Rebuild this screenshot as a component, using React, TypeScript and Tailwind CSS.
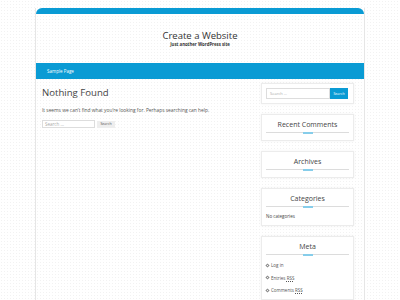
import React from 'react';

function Widget({ title, children }: { title?: string; children?: React.ReactNode }) {
	return (
		<div
			className={`border border-[#ececec] bg-white px-[4px] pt-[5px] shadow-[0_0_3px_rgba(0,0,0,0.05)] ${children ? 'pb-[6px]' : 'pb-[7px]'}`}
		>
			{title && (
				<div className="relative border-b border-[#dcdcdc] pb-[3px] text-center text-[7px] leading-[9px] text-[#444]">
					{title}
					<span className="absolute -bottom-[2px] left-1/2 h-[2px] w-[10px] -translate-x-1/2 bg-[#86cdea]" />
				</div>
			)}
			{children}
		</div>
	);
}

function MetaLink({ children }: { children: React.ReactNode }) {
	return (
		<li className="flex items-center gap-[1px] text-[4.5px] leading-[6px] text-[#555]">
			<span className="inline-block h-[3px] w-[3px] rotate-45 border border-[#888]" />
			<span className="ml-[1px]">{children}</span>
		</li>
	);
}

export default function App() {
	return (
		<div
			className="min-h-[300px] bg-white bg-[radial-gradient(#f2f2f2_0.6px,transparent_0.8px)] bg-[size:3px_3px] pt-[8px]"
			style={{ fontFamily: '"Open Sans", "Noto Sans", sans-serif' }}
		>
			<div className="mx-auto min-h-[292px] w-[330px] border-x border-[#e6e6e6]">
				<div className="h-[6px] rounded-t-[6px] bg-[#0a9bd4]" />
				<header className="flex h-[49px] flex-col items-center pt-[17px]">
					<h1 className="text-[9.5px] leading-[10px] text-[#333]">Create a Website</h1>
					<p className="mt-[1px] text-[4.3px] font-bold leading-[4px] text-[#333]">Just another WordPress site</p>
				</header>
				<nav className="flex h-[16px] items-center bg-[#0a9bd4] px-[11px]">
					<a className="text-[4.5px] text-white">Sample Page</a>
				</nav>
				<div className="flex pr-[10px]">
					<main className="flex-1 px-[6px] pt-[7px]">
						<h2 className="text-[9.6px] leading-[14px] text-[#444]">Nothing Found</h2>
						<p className="mt-[7px] text-[4.85px] leading-[6px] text-[#555]">
							It seems we can’t find what you’re looking for. Perhaps searching can help.
						</p>
						<form className="mt-[7px] flex items-center gap-[2px]">
							<div className="flex h-[8px] w-[53px] items-center border border-[#ddd] bg-white px-[2px] text-[4.5px] text-[#aaa]">
								Search …
							</div>
							<div className="flex h-[7px] w-[18px] items-center justify-center bg-[#eeeeee] text-[3.5px] text-[#555]">
								Search
							</div>
						</form>
					</main>
					<aside className="flex w-[93px] flex-col gap-[10px] pt-[4px]">
						<div className="flex border border-[#ececec] bg-white p-[4px] pr-[5px] shadow-[0_0_3px_rgba(0,0,0,0.05)]">
							<div className="flex h-[11px] flex-1 items-center border border-[#ddd] px-[3px] text-[4px] text-[#aaa]">
								Search …
							</div>
							<div className="flex h-[11px] w-[18px] items-center justify-center bg-[#0a9bd4] text-[3.5px] text-white">
								Search
							</div>
						</div>
						<Widget title="Recent Comments" />
						<Widget title="Archives" />
						<Widget title="Categories">
							<p className="mt-[6px] text-[4.5px] leading-[6px] text-[#444]">No categories</p>
						</Widget>
						<Widget title="Meta">
							<ul className="mt-[7px] flex flex-col gap-[6.5px]">
								<MetaLink>Log in</MetaLink>
								<MetaLink>
									Entries <span className="underline decoration-dotted">RSS</span>
								</MetaLink>
								<MetaLink>
									Comments <span className="underline decoration-dotted">RSS</span>
								</MetaLink>
							</ul>
						</Widget>
					</aside>
				</div>
			</div>
		</div>
	);
}
